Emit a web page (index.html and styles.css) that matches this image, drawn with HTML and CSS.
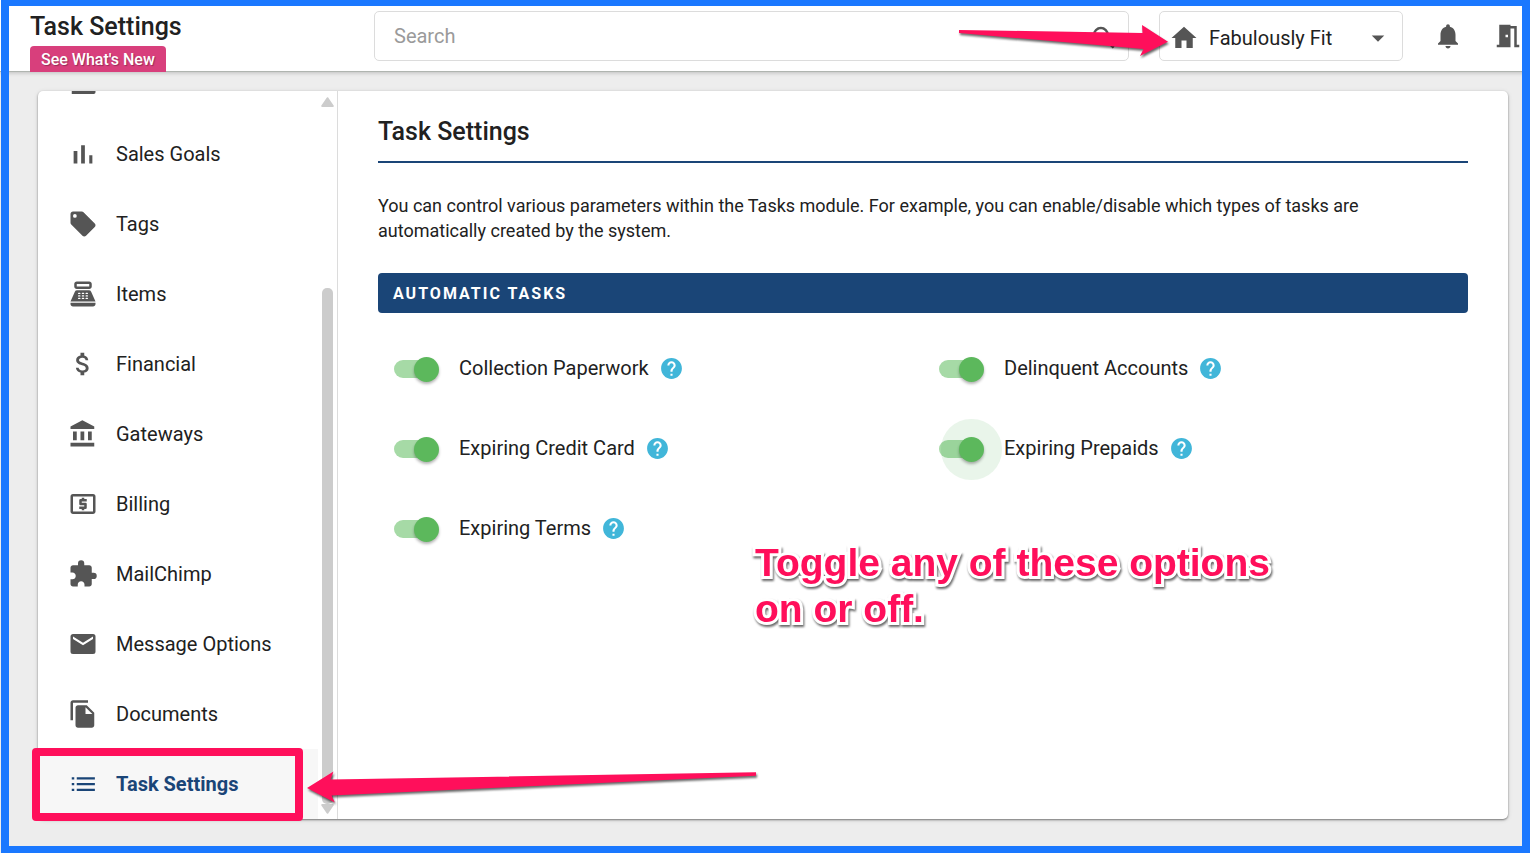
FILE: index.html
```html
<!DOCTYPE html>
<html lang="en">
<head>
<meta charset="utf-8">
<title>Task Settings</title>
<link rel="stylesheet" href="styles.css">
</head>
<body>
<div class="app">
  <header class="topbar">
    <div class="brand">
      <h1 class="page-title">Task Settings</h1>
      <a class="whats-new" href="#new">See What's New</a>
    </div>
    <label class="search">
      <input class="search-input" type="text" placeholder="Search" aria-label="Search">
      <svg class="icon" viewBox="0 0 24 24"><path d="M15.5 14h-.79l-.28-.27A6.47 6.47 0 0 0 16 9.5 6.5 6.5 0 1 0 9.5 16c1.61 0 3.09-.59 4.23-1.57l.27.28v.79l5 4.99L20.49 19l-4.99-5zm-6 0C7.01 14 5 11.99 5 9.5S7.01 5 9.5 5 14 7.01 14 9.5 11.99 14 9.5 14z"/></svg>
    </label>
    <div class="location">
      <svg class="icon" viewBox="0 0 24 24"><path d="M10 20V14H14V20H19V12H22L12 3L2 12H5V20H10Z"/></svg>
      <select class="location-select" aria-label="Location"><option>Fabulously Fit</option></select>
      <svg class="icon" viewBox="0 0 24 24"><path d="M7 10l5 5 5-5z"/></svg>
    </div>
    <button class="icon-button" aria-label="Notifications"><svg class="icon" viewBox="0 0 24 24"><path d="M12 22c1.1 0 2-.9 2-2h-4c0 1.1.89 2 2 2zm6-6v-5c0-3.07-1.64-5.64-4.5-6.32V4c0-.83-.67-1.5-1.5-1.5s-1.5.67-1.5 1.5v.68C7.63 5.36 6 7.92 6 11v5l-2 2v1h16v-1l-2-2z"/></svg></button>
    <button class="icon-button" aria-label="Log out"><svg class="icon" viewBox="0 0 24 24"><path d="M14 6v15H3v-2h2V3h9v1h5v15h2v2h-4V6h-3zm-4 5v2h2v-2h-2z"/></svg></button>
  </header>

  <div class="card">
    <nav class="sidebar">
      <div class="menu">
        <div class="menu-item"><svg class="icon" viewBox="0 0 24 24"><path d="M3 5h19v13.600a1.400 1.400 0 0 1-1.400 1.400H3z"/></svg></div>
        <a class="menu-item" href="#goals"><svg class="icon" viewBox="0 0 24 24"><path d="M4.500 9.500h3V19.500h-3zM10.500 5h3v14.500h-3zM17 13h2.500v6.500H17z"/></svg>Sales Goals</a>
        <a class="menu-item" href="#tags"><svg class="icon" viewBox="0 0 24 24"><path d="M5.500 7A1.500 1.500 0 0 1 4 5.500 1.500 1.500 0 0 1 5.500 4 1.500 1.500 0 0 1 7 5.500 1.500 1.500 0 0 1 5.500 7m15.910 4.580l-9-9C12.050 2.220 11.550 2 11 2H4c-1.110 0-2 .89-2 2v7c0 .55.220 1.050.590 1.410l8.990 9c.370.360.870.590 1.420.590s1.050-.230 1.410-.590l7-7c.370-.360.590-.860.590-1.410 0-.560-.230-1.060-.590-1.420z"/></svg>Tags</a>
        <a class="menu-item" href="#items"><svg class="icon" viewBox="0 0 24 24"><path d="M17 2H7c-1.100 0-2 .9-2 2v2c0 1.100.9 2 2 2h10c1.100 0 2-.9 2-2V4c0-1.100-.9-2-2-2zm0 4H7V4h10v2zm3 16H4c-1.100 0-2-.9-2-2v-1h20v1c0 1.100-.9 2-2 2zm-1.470-11.810A2 2 0 0 0 16.700 9H7.300a2 2 0 0 0-1.830 1.190L2 18h20l-3.470-7.810zM9.500 16h-1a.5.5 0 0 1 0-1h1a.5.5 0 0 1 0 1zm0-2h-1a.5.5 0 0 1 0-1h1a.5.5 0 0 1 0 1zm0-2h-1a.5.5 0 0 1 0-1h1a.5.5 0 0 1 0 1zm3 4h-1a.5.5 0 0 1 0-1h1a.5.5 0 0 1 0 1zm0-2h-1a.5.5 0 0 1 0-1h1a.5.5 0 0 1 0 1zm0-2h-1a.5.5 0 0 1 0-1h1a.5.5 0 0 1 0 1zm3 4h-1a.5.5 0 0 1 0-1h1a.5.5 0 0 1 0 1zm0-2h-1a.5.5 0 0 1 0-1h1a.5.5 0 0 1 0 1zm0-2h-1a.5.5 0 0 1 0-1h1a.5.5 0 0 1 0 1z"/></svg>Items</a>
        <a class="menu-item" href="#financial"><svg class="icon" viewBox="0 0 24 24"><path d="M11.800 10.900c-2.270-.590-3-1.200-3-2.150 0-1.090 1.010-1.850 2.700-1.850 1.780 0 2.440.850 2.500 2.100h2.210c-.070-1.720-1.120-3.300-3.210-3.810V3h-3v2.160c-1.940.420-3.500 1.680-3.500 3.610 0 2.310 1.910 3.460 4.700 4.130 2.500.6 3 1.480 3 2.410 0 .690-.490 1.790-2.700 1.790-2.060 0-2.870-.920-2.980-2.100h-2.200c.120 2.190 1.760 3.420 3.680 3.830V21h3v-2.150c1.950-.370 3.500-1.500 3.500-3.550 0-2.840-2.430-3.810-4.700-4.400z"/></svg>Financial</a>
        <a class="menu-item" href="#gateways"><svg class="icon" viewBox="0 0 24 24"><path d="M11.500 1L2 6v2h19V6m-5 4v7h3v-7M2 22h19v-3H2m8-9v7h3v-7m-9 0v7h3v-7H4z"/></svg>Gateways</a>
        <a class="menu-item" href="#billing"><svg class="icon" viewBox="0 0 24 24"><path d="M11 17h2v-1h1a1 1 0 0 0 1-1v-3a1 1 0 0 0-1-1h-3v-1h4V8h-2V7h-2v1h-1a1 1 0 0 0-1 1v3a1 1 0 0 0 1 1h3v1H9v2h2v1zm9-13H4a2 2 0 0 0-2 2v12c0 1.110.890 2 2 2h16c1.110 0 2-.890 2-2V6a2 2 0 0 0-2-2zm0 14H4V6h16v12z"/></svg>Billing</a>
        <a class="menu-item" href="#mailchimp"><svg class="icon" viewBox="0 0 24 24"><path d="M20.500 11H19V7c0-1.100-.9-2-2-2h-4V3.500a2.500 2.500 0 0 0-5 0V5H4c-1.100 0-2 .9-2 2v3.800h1.500c1.490 0 2.700 1.210 2.700 2.700s-1.210 2.700-2.700 2.700H2V20c0 1.100.9 2 2 2h3.800v-1.500c0-1.490 1.210-2.700 2.700-2.700s2.700 1.210 2.700 2.700V22H17c1.100 0 2-.9 2-2v-4h1.500a2.500 2.500 0 0 0 0-5z"/></svg>MailChimp</a>
        <a class="menu-item" href="#messages"><svg class="icon" viewBox="0 0 24 24"><path d="M20 8l-8 5-8-5V6l8 5 8-5m0-2H4c-1.110 0-2 .890-2 2v12a2 2 0 0 0 2 2h16a2 2 0 0 0 2-2V6a2 2 0 0 0-2-2z"/></svg>Message Options</a>
        <a class="menu-item" href="#documents"><svg class="icon" viewBox="0 0 24 24"><path d="M16 1H4c-1.100 0-2 .9-2 2v14h2V3h12V1zm-1 4l6 6v10c0 1.100-.9 2-2 2H7.990C6.890 23 6 22.100 6 21l.010-14c0-1.100.890-2 1.990-2h7zm-1 7h5.500L14 6.500V12z"/></svg>Documents</a>
        <a class="menu-item active" href="#tasks"><svg class="icon" viewBox="0 0 24 24"><path d="M7 6.500h14.500v1.800H7zM7 11.100h14.500v1.800H7zM7 15.700h14.500v1.800H7zM3 6.500h2v1.800H3zM3 11.100h2v1.800H3zM3 15.700h2v1.800H3z"/></svg>Task Settings</a>
      </div>
      <div class="scrollbar">
        <svg class="scroll-arrow" viewBox="0 0 13 10"><path d="M6.500 1.200L11.800 9H1.200z"/></svg>
        <div class="scroll-track"><div class="scroll-thumb"></div></div>
        <svg class="scroll-arrow" viewBox="0 0 13 10"><path d="M6.500 8.800L11.800 1H1.200z"/></svg>
      </div>
    </nav>

    <main class="content">
      <h2 class="content-title">Task Settings</h2>
      <p class="intro">You can control various parameters within the Tasks module. For example, you can enable/disable which types of tasks are automatically created by the system.</p>
      <h3 class="banner">Automatic Tasks</h3>
      <div class="options">
        <div class="option"><label class="option-label"><input class="switch" type="checkbox" checked>Collection Paperwork</label><button class="help" aria-label="Help"><svg class="help-icon" viewBox="0 0 24 24"><path d="M12 2C6.480 2 2 6.480 2 12s4.480 10 10 10 10-4.480 10-10S17.520 2 12 2zm1 17h-2v-2h2v2zm2.070-7.750l-.9.920C13.450 12.900 13 13.500 13 15h-2v-.5c0-1.100.450-2.100 1.170-2.830l1.240-1.260c.370-.360.590-.860.590-1.410 0-1.100-.9-2-2-2s-2 .9-2 2H8c0-2.210 1.790-4 4-4s4 1.790 4 4c0 .880-.360 1.680-.930 2.250z"/></svg></button></div>
        <div class="option"><label class="option-label"><input class="switch" type="checkbox" checked>Delinquent Accounts</label><button class="help" aria-label="Help"><svg class="help-icon" viewBox="0 0 24 24"><path d="M12 2C6.480 2 2 6.480 2 12s4.480 10 10 10 10-4.480 10-10S17.520 2 12 2zm1 17h-2v-2h2v2zm2.070-7.750l-.9.920C13.450 12.900 13 13.500 13 15h-2v-.5c0-1.100.450-2.100 1.170-2.830l1.240-1.260c.370-.360.590-.860.590-1.410 0-1.100-.9-2-2-2s-2 .9-2 2H8c0-2.210 1.790-4 4-4s4 1.790 4 4c0 .880-.360 1.680-.930 2.250z"/></svg></button></div>
        <div class="option"><label class="option-label"><input class="switch" type="checkbox" checked>Expiring Credit Card</label><button class="help" aria-label="Help"><svg class="help-icon" viewBox="0 0 24 24"><path d="M12 2C6.480 2 2 6.480 2 12s4.480 10 10 10 10-4.480 10-10S17.520 2 12 2zm1 17h-2v-2h2v2zm2.070-7.750l-.9.920C13.450 12.900 13 13.500 13 15h-2v-.5c0-1.100.450-2.100 1.170-2.830l1.240-1.260c.370-.360.590-.860.590-1.410 0-1.100-.9-2-2-2s-2 .9-2 2H8c0-2.210 1.790-4 4-4s4 1.790 4 4c0 .880-.360 1.680-.930 2.250z"/></svg></button></div>
        <div class="option"><label class="option-label"><input class="switch focused" type="checkbox" checked>Expiring Prepaids</label><button class="help" aria-label="Help"><svg class="help-icon" viewBox="0 0 24 24"><path d="M12 2C6.480 2 2 6.480 2 12s4.480 10 10 10 10-4.480 10-10S17.520 2 12 2zm1 17h-2v-2h2v2zm2.070-7.750l-.9.920C13.450 12.900 13 13.500 13 15h-2v-.5c0-1.100.450-2.100 1.170-2.830l1.240-1.260c.370-.360.590-.860.590-1.410 0-1.100-.9-2-2-2s-2 .9-2 2H8c0-2.210 1.790-4 4-4s4 1.790 4 4c0 .880-.360 1.680-.930 2.250z"/></svg></button></div>
        <div class="option"><label class="option-label"><input class="switch" type="checkbox" checked>Expiring Terms</label><button class="help" aria-label="Help"><svg class="help-icon" viewBox="0 0 24 24"><path d="M12 2C6.480 2 2 6.480 2 12s4.480 10 10 10 10-4.480 10-10S17.520 2 12 2zm1 17h-2v-2h2v2zm2.070-7.750l-.9.920C13.450 12.900 13 13.500 13 15h-2v-.5c0-1.100.450-2.100 1.170-2.830l1.240-1.260c.370-.360.590-.860.590-1.410 0-1.100-.9-2-2-2s-2 .9-2 2H8c0-2.210 1.790-4 4-4s4 1.790 4 4c0 .880-.360 1.680-.930 2.250z"/></svg></button></div>
      </div>
    </main>
  </div>
</div>

<div class="frame"></div>
<svg class="arrows" viewBox="0 0 1530 853">
  <path d="M959 30L1142.500 33L1142 25L1168 41.700L1140 56L1143.500 49L959 33z"/>
  <path d="M307 788L333.500 771.500L330.500 779.500L756 772.300V775.800L331.500 795.500L334.800 802.500z"/>
</svg>
<div class="highlight"></div>
<p class="note">Toggle any of these options<br>on or off.</p>
</body>
</html>
```
FILE: styles.css
```css
* { box-sizing: border-box; }

body {
  margin: 0;
  background: #ededed;
  color: #212121;
  font-family: Roboto, "Liberation Sans", sans-serif;
  font-size: 20px;
  position: relative;
}

h1, h2, h3, p { margin: 0; }

button, input, select {
  font: inherit;
  color: inherit;
  border: 0;
  padding: 0;
  margin: 0;
  background: none;
}

a { color: inherit; text-decoration: none; }

.app {
  min-height: 100vh;
  display: flex;
  flex-direction: column;
  gap: 19px;
  padding-bottom: 34px;
  overflow: hidden;
}

.icon {
  width: 30px;
  height: 30px;
  flex: none;
  display: block;
  fill: #555;
}

/* Top bar */
.topbar {
  height: 72px;
  padding: 11px 7px 0 30px;
  display: flex;
  align-items: flex-start;
  gap: 30px;
  background: #fff;
  border-bottom: 1px solid #b0b5b0;
  box-shadow: 0 1px 4px rgba(0, 0, 0, .2);
}

.brand {
  width: 314px;
  display: flex;
  flex-direction: column;
  align-items: flex-start;
  gap: 3px;
}

.page-title, .content-title {
  font-size: 25px;
  line-height: 32px;
  font-weight: 500;
}

.whats-new {
  height: 26px;
  padding: 0 11px;
  border-radius: 4px 4px 0 0;
  background: #d83f7c;
  color: #fff;
  font-size: 16px;
  line-height: 27px;
  font-weight: 500;
  text-shadow: 1px 1px 1px rgba(0, 0, 0, .3);
}

.search, .location {
  height: 50px;
  display: flex;
  align-items: center;
  border: 1px solid #dcdcdc;
  border-radius: 5px;
}

.search { flex: 1; padding: 0 9px 0 19px; }
.search .icon { margin-top: 4px; }
.search-input { flex: 1; min-width: 0; outline: 0; }
.search-input::placeholder { color: #9a9a9a; }

.location { width: 244px; padding: 3px 9px 0; gap: 10px; }
.location-select { flex: 1; min-width: 0; appearance: none; }

.icon-button { height: 50px; }

/* Card */
.card {
  flex: 1;
  margin: 0 22px 0 38px;
  display: grid;
  grid-template-columns: 300px 1fr;
  background: #fff;
  border-radius: 5px;
  box-shadow: 0 1px 2px rgba(0, 0, 0, .45), 0 1px 5px rgba(0, 0, 0, .12);
  overflow: hidden;
}

.sidebar {
  display: flex;
  height: 100%;
  border-right: 1px solid #dcdcdc;
}

.menu {
  width: 280px;
  height: calc(100vh - 125px);
  display: flex;
  flex-direction: column;
  justify-content: flex-end;
  overflow: hidden;
}

.menu-item {
  flex: none;
  height: 70px;
  padding-left: 30px;
  display: flex;
  align-items: center;
  gap: 18px;
}

.menu-item.active {
  background: #f7f7f7;
  color: #1a4577;
  font-weight: 700;
}

.active .icon { fill: #1a4577; }

.scrollbar {
  flex: 1;
  display: flex;
  flex-direction: column;
  align-items: center;
  padding: 6px 0 5px;
}

.scroll-arrow {
  width: 13px;
  height: 10px;
  fill: #ccc;
  stroke: #ccc;
  stroke-width: 2;
  stroke-linejoin: round;
}

.scroll-track {
  flex: 1;
  display: flex;
  flex-direction: column;
  justify-content: flex-end;
}

.scroll-thumb {
  width: 11px;
  height: 74%;
  border-radius: 5px;
  background: #ccc;
}

/* Content */
.content { padding: 20px 40px; }

.content-title {
  height: 52px;
  line-height: 41px;
  border-bottom: 2px solid #1a4577;
}

.intro {
  margin: 30px 0;
  font-size: 18px;
  line-height: 25px;
}

.banner {
  height: 40px;
  padding-left: 15px;
  border-radius: 4px;
  background: #1a4577;
  color: #fff;
  font-size: 16px;
  line-height: 41px;
  font-weight: 700;
  letter-spacing: 2px;
  text-transform: uppercase;
}

.options {
  margin-top: 15px;
  display: grid;
  grid-template-columns: 1fr 1fr;
  grid-auto-rows: 80px;
}

.option {
  padding-left: 16px;
  display: flex;
  align-items: center;
  gap: 10px;
}

.option-label {
  display: flex;
  align-items: center;
  gap: 20px;
}

.switch {
  appearance: none;
  width: 45px;
  height: 25px;
  margin-top: 2px;
  display: grid;
  align-items: center;
}

.switch::before, .switch::after { content: ""; grid-area: 1 / 1; }

.switch::before {
  width: 40px;
  height: 18px;
  border-radius: 9px;
  background: #a6daa6;
}

.switch::after {
  width: 25px;
  height: 25px;
  justify-self: end;
  border-radius: 50%;
  background: #5cb85c;
  box-shadow: 0 2px 3px rgba(0, 0, 0, .3);
}

.switch.focused::after {
  box-shadow: 0 2px 3px rgba(0, 0, 0, .3), 0 0 0 18px rgba(76, 175, 80, .12);
}

.help-icon {
  width: 25px;
  height: 25px;
  display: block;
  fill: #41b6d9;
}

/* Annotations drawn over the page */
.frame {
  position: absolute;
  inset: 0;
  border: solid #1a78ff;
  border-width: 6px 8px 7px;
  margin-left: 1px;
  pointer-events: none;
}

.arrows {
  position: absolute;
  top: 0;
  left: 0;
  width: 100%;
  fill: #ff0f5b;
  filter: drop-shadow(1px 2px 1px rgba(0, 0, 0, .6));
  pointer-events: none;
}

.highlight {
  position: absolute;
  left: 32px;
  bottom: 32px;
  width: 271px;
  height: 73px;
  border: 8px solid #ff0f5b;
  border-radius: 4px;
  pointer-events: none;
}

.note {
  position: absolute;
  left: 755px;
  top: 540px;
  color: #ff0f5b;
  font: bold 39px/46px "Liberation Sans", Arial, sans-serif;
  white-space: nowrap;
  -webkit-text-stroke: 6px #fff;
  paint-order: stroke fill;
  stroke-linejoin: round;
  filter: drop-shadow(1px 2px 1px rgba(0, 0, 0, .6));
}
```
